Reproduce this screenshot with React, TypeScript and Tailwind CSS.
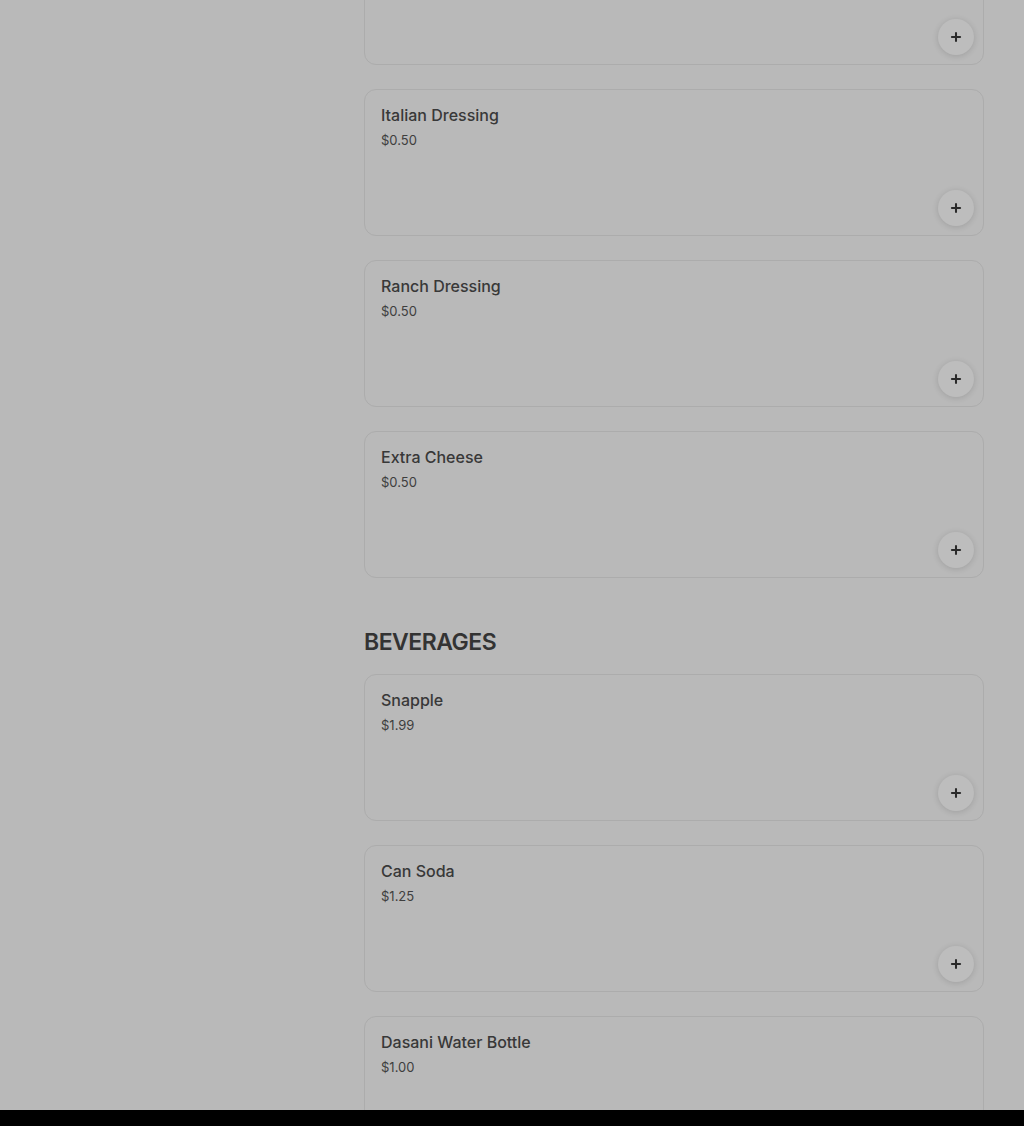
import { Plus } from "lucide-react";

type Item = { name: string; price: string };

const sides: Item[] = [
  { name: "", price: "" },
  { name: "Italian Dressing", price: "$0.50" },
  { name: "Ranch Dressing", price: "$0.50" },
  { name: "Extra Cheese", price: "$0.50" },
];

const beverages: Item[] = [
  { name: "Snapple", price: "$1.99" },
  { name: "Can Soda", price: "$1.25" },
  { name: "Dasani Water Bottle", price: "$1.00" },
];

function ItemCard({ item }: { item: Item }) {
  return (
    <div className="relative h-[147px] shrink-0 rounded-xl border border-[#acacac] bg-[#b9b9b9] px-4 pt-[14px]">
      {item.name && (
        <>
          <div className="text-[16px] leading-[22px] font-medium text-[#383838]">{item.name}</div>
          <div className="mt-1 text-[13px] leading-5 text-[#3e3e3e]">{item.price}</div>
        </>
      )}
      <button className="absolute right-[9px] bottom-[9px] flex h-9 w-9 items-center justify-center rounded-full bg-[#bdbdbd] shadow-[0_1px_6px_rgba(0,0,0,0.14)]">
        <Plus className="h-[14px] w-[14px] text-[#2a2a2a]" strokeWidth={3.5} />
      </button>
    </div>
  );
}

export default function App() {
  return (
    <div
      className="flex h-[1126px] flex-col overflow-hidden bg-[#b9b9b9]"
      style={{ fontFamily: "Inter, 'Noto Sans', sans-serif" }}
    >
      <div className="flex flex-1 overflow-hidden">
        <div className="w-[364px] shrink-0" />
        <div className="-mt-[82px] flex w-[620px] flex-col gap-6">
          {sides.map((it, i) => (
            <ItemCard key={i} item={it} />
          ))}
          <h2 className="mt-[24px] -mb-[8px] text-[23px] leading-8 font-semibold tracking-[-0.5px] text-[#333]">
            BEVERAGES
          </h2>
          {beverages.map((it) => (
            <ItemCard key={it.name} item={it} />
          ))}
        </div>
      </div>
      <div className="h-4 shrink-0 bg-black" />
    </div>
  );
}
